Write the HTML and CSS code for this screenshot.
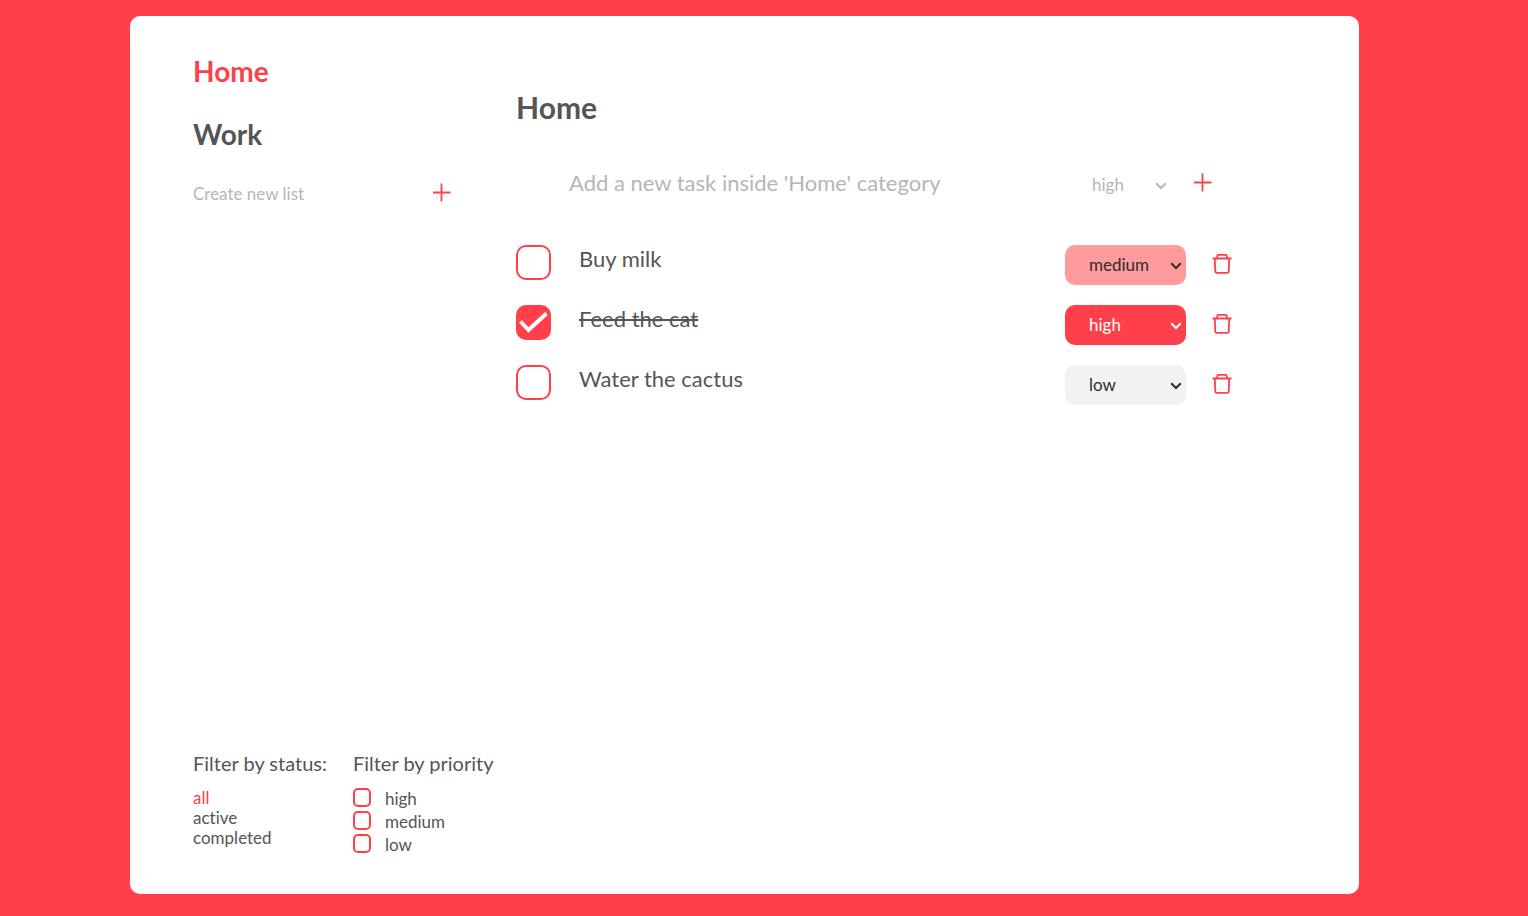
FILE: index.html
```html
<!DOCTYPE html>
<html lang="en">
<head>
<meta charset="utf-8">
<meta name="viewport" content="width=device-width, initial-scale=1">
<title>Tasks</title>
<link rel="stylesheet" href="styles.css">
</head>
<body>
<div class="card">
  <aside class="sidebar">
    <nav class="lists">
      <a class="list-link active" href="#home">Home</a>
      <a class="list-link" href="#work">Work</a>
    </nav>
    <form class="new-list">
      <input class="list-input" type="text" placeholder="Create new list" aria-label="Create new list">
      <button class="icon-button" type="button" aria-label="Add list">
        <svg class="plus" viewBox="0 0 20 20"><path d="M9.500 .5v18M1 9.500h17.500"/></svg>
      </button>
    </form>
    <div class="filters">
      <section class="filter">
        <h3 class="filter-title">Filter by status:</h3>
        <a class="status active" href="#all">all</a>
        <a class="status" href="#active">active</a>
        <a class="status" href="#completed">completed</a>
      </section>
      <section class="filter">
        <h3 class="filter-title">Filter by priority</h3>
        <label class="priority-row"><input class="small-check" type="checkbox"><span>high</span></label>
        <label class="priority-row"><input class="small-check" type="checkbox"><span>medium</span></label>
        <label class="priority-row"><input class="small-check" type="checkbox"><span>low</span></label>
      </section>
    </div>
  </aside>
  <main class="main">
    <h1 class="title">Home</h1>
    <form class="new-task">
      <input class="task-input" type="text" placeholder="Add a new task inside 'Home' category" aria-label="New task">
      <span class="select-wrap new-priority">
        <select class="select" aria-label="New task priority"><option selected>high</option><option>medium</option><option>low</option></select>
        <svg class="chevron" viewBox="0 0 12 8"><path d="M1.200 1.200L6 6l4.800-4.800"/></svg>
      </span>
      <button class="icon-button" type="button" aria-label="Add task">
        <svg class="plus" viewBox="0 0 20 20"><path d="M9.500 .5v18M1 9.500h17.500"/></svg>
      </button>
    </form>
    <ul class="tasks">
      <li class="task">
        <span class="check-wrap"><input class="check" type="checkbox" id="t1"></span>
        <label class="task-name" for="t1">Buy milk</label>
        <span class="select-wrap priority medium">
          <select class="select" aria-label="Priority of Buy milk"><option>high</option><option selected>medium</option><option>low</option></select>
          <svg class="chevron" viewBox="0 0 12 8"><path d="M1.200 1.200L6 6l4.800-4.800"/></svg>
        </span>
        <button class="icon-button" type="button" aria-label="Delete Buy milk">
          <svg class="trash" viewBox="0 0 20 22"><path d="M.5 5.500h19M5.200 5V3q0-1.200 1.200-1.200h7.200q1.200 0 1.200 1.200v2M2.800 6l.5 12.700q.1 1.200 1.300 1.200h10.800q1.200 0 1.300-1.200L17.200 6"/></svg>
        </button>
      </li>
      <li class="task">
        <span class="check-wrap"><input class="check" type="checkbox" id="t2" checked>
          <svg class="tick" viewBox="0 0 35 35"><path d="M4.500 16.500l8 8.500L30.500 8.500"/></svg></span>
        <label class="task-name done" for="t2">Feed the cat</label>
        <span class="select-wrap priority high">
          <select class="select" aria-label="Priority of Feed the cat"><option selected>high</option><option>medium</option><option>low</option></select>
          <svg class="chevron" viewBox="0 0 12 8"><path d="M1.200 1.200L6 6l4.800-4.800"/></svg>
        </span>
        <button class="icon-button" type="button" aria-label="Delete Feed the cat">
          <svg class="trash" viewBox="0 0 20 22"><path d="M.5 5.500h19M5.200 5V3q0-1.200 1.200-1.200h7.200q1.200 0 1.200 1.200v2M2.800 6l.5 12.700q.1 1.200 1.300 1.200h10.800q1.200 0 1.300-1.200L17.200 6"/></svg>
        </button>
      </li>
      <li class="task">
        <span class="check-wrap"><input class="check" type="checkbox" id="t3"></span>
        <label class="task-name" for="t3">Water the cactus</label>
        <span class="select-wrap priority low">
          <select class="select" aria-label="Priority of Water the cactus"><option>high</option><option>medium</option><option selected>low</option></select>
          <svg class="chevron" viewBox="0 0 12 8"><path d="M1.200 1.200L6 6l4.800-4.800"/></svg>
        </span>
        <button class="icon-button" type="button" aria-label="Delete Water the cactus">
          <svg class="trash" viewBox="0 0 20 22"><path d="M.5 5.500h19M5.200 5V3q0-1.200 1.200-1.200h7.200q1.200 0 1.200 1.200v2M2.800 6l.5 12.700q.1 1.200 1.300 1.200h10.800q1.200 0 1.300-1.200L17.200 6"/></svg>
        </button>
      </li>
    </ul>
  </main>
</div>
</body>
</html>
```
FILE: styles.css
```css
* { box-sizing: border-box; }

body {
  display: flex;
  min-height: 100vh;
  margin: 0;
  padding: 16px 169px 22px 130px;
  background: #ff3f49;
  color: #555;
  font-family: Lato, sans-serif;
  font-size: 17px;
  line-height: 20px;
  font-variant-ligatures: none;
}

input, select, button { font: inherit; color: inherit; margin: 0; }
a { color: inherit; text-decoration: none; }

.card {
  flex: 1;
  display: grid;
  grid-template-columns: 323px 1fr;
  padding: 38px 120px 37px 63px;
  background: #fff;
  border-radius: 10px;
}

.sidebar { display: flex; flex-direction: column; }
.lists { display: flex; flex-direction: column; align-items: flex-start; gap: 29px; }
.list-link { font-size: 28px; line-height: 34px; font-weight: 700; }
.active { color: #ff3f49; }

.new-list {
  display: flex;
  align-items: center;
  justify-content: space-between;
  margin: 30px 64px 0 0;
}
.list-input, .task-input {
  min-width: 0;
  flex: 1;
  padding: 0;
  border: 0;
  background: none;
}
.list-input { height: 24px; }
.list-input::placeholder, .task-input::placeholder { color: #b6b6b6; opacity: 1; }

.icon-button {
  display: flex;
  padding: 0;
  border: 0;
  background: none;
  color: #ff3f49;
  cursor: pointer;
}
.plus, .trash, .tick, .chevron { fill: none; stroke: currentColor; }
.plus { width: 20px; height: 20px; stroke-width: 1.8; }
.trash { width: 20px; height: 22px; stroke-width: 1.8; }

.filters { display: flex; gap: 26px; margin-top: auto; white-space: nowrap; }
.filter { display: flex; flex-direction: column; align-items: flex-start; }
.filter-title { margin: 0 0 13px; font-size: 20px; line-height: 24px; font-weight: 400; }
.priority-row { display: flex; gap: 14px; height: 23px; }
.priority-row span { padding-top: 1px; }

.small-check, .check {
  appearance: none;
  border: 2px solid #ff3f49;
  background: #fff;
}
.small-check { width: 18px; height: 19px; border-radius: 5px; }

.main { padding-top: 35px; }
.title { margin: 0; font-size: 30px; line-height: 36px; }
.new-task { display: flex; align-items: center; height: 40px; margin: 38px 26px 0 53px; }
.task-input { font-size: 22px; line-height: 28px; }

.select-wrap { position: relative; display: flex; height: 40px; }
.select {
  appearance: none;
  width: 100%;
  padding: 0 0 0 24px;
  border: 0;
  background: none;
}
.chevron {
  position: absolute;
  top: 17px;
  right: 4px;
  width: 12px;
  height: 8px;
  stroke-width: 2;
  pointer-events: none;
}
.new-priority { width: 103px; margin: 3px 22px 0 0; color: #b6b6b6; }

.tasks { display: flex; flex-direction: column; gap: 20px; margin: 42px 0 0; padding: 0; list-style: none; }
.task { display: flex; align-items: flex-start; padding-right: 7px; }
.check-wrap { position: relative; display: flex; }
.check { width: 35px; height: 35px; border-radius: 10px; }
.check:checked { background: #ff3f49; }
.tick { position: absolute; inset: 0; color: #fff; stroke-width: 4; pointer-events: none; }
.task-name { flex: 1; margin-left: 28px; font-size: 22px; line-height: 28px; }
.task .icon-button { padding-top: 8px; }
.done { text-decoration: line-through; }
.priority { width: 121px; margin-right: 26px; border-radius: 10px; }
.medium { background: #ff9a9d; color: #2d2d2d; }
.high { background: #ff3f49; color: #fff; }
.low { background: #f2f2f2; color: #2d2d2d; }
```
